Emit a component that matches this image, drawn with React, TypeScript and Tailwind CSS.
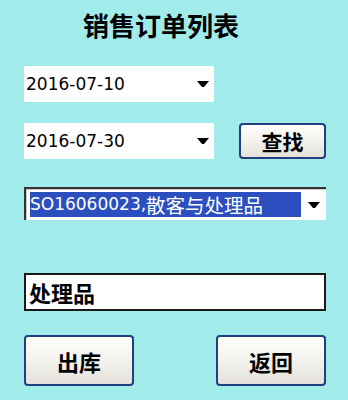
const cjk = '"Noto Sans CJK SC", "DejaVu Sans", sans-serif'
const latin = '"DejaVu Sans", "Noto Sans CJK SC", sans-serif'

function Arrow() {
  return (
    <svg width="12" height="6" viewBox="0 0 12 6" className="shrink-0">
      <path d="M0 0H12L7 6H5Z" fill="#000" />
    </svg>
  )
}

function DateBox({ value }: { value: string }) {
  return (
    <div className="w-[190px] h-[36px] bg-white flex items-center pl-[2px] pr-[5px]">
      <span className="flex-1 text-[17px] text-black leading-none" style={{ fontFamily: latin }}>
        {value}
      </span>
      <Arrow />
    </div>
  )
}

function XpButton({ label, className }: { label: string; className?: string }) {
  return (
    <button
      className={
        "h-full rounded-[4px] border-2 border-[#1f3f7f] bg-gradient-to-b from-[#fdfdfb] via-[#f3f2ee] to-[#e3e1da] text-black font-bold leading-none flex items-center justify-center " +
        (className ?? "")
      }
      style={{ fontFamily: cjk }}
    >
      {label}
    </button>
  )
}

export default function App() {
  return (
    <div className="w-[348px] h-[400px] bg-[#a1ecea] overflow-hidden flex flex-col pl-[24px]">
      <h1
        className="mt-[9px] ml-[59px] h-[32px] text-[26px] font-bold text-black leading-none flex items-center"
        style={{ fontFamily: cjk }}
      >
        销售订单列表
      </h1>

      <div className="mt-[25px]">
        <DateBox value="2016-07-10" />
      </div>

      <div className="mt-[21px] flex h-[36px]">
        <DateBox value="2016-07-30" />
        <XpButton label="查找" className="ml-[25px] w-[87px] text-[21px]" />
      </div>

      <div className="mt-[28px] w-[302px] h-[33px] bg-white border-t-2 border-l-2 border-t-[#333] border-l-[#333] flex items-center pl-[4px] pr-[6px] shadow-[inset_1px_1px_0_#c8c8c8]">
        <div className="w-[271px] h-[25px] bg-[#2b4fbf] text-white flex items-center whitespace-nowrap">
          <span className="text-[17px] leading-[25px]" style={{ fontFamily: latin }}>
            SO16060023,
          </span>
          <span className="text-[19.5px] leading-[25px]" style={{ fontFamily: cjk }}>
            散客与处理品
          </span>
        </div>
        <div className="flex-1 flex justify-end">
          <Arrow />
        </div>
      </div>

      <div
        className="mt-[53px] w-[302px] h-[38px] bg-white border-2 border-[#1a1a1a] flex items-center pl-[3px] text-[22px] font-bold text-black leading-none"
        style={{ fontFamily: cjk }}
      >
        处理品
      </div>

      <div className="mt-[24px] w-[302px] h-[51px] flex justify-between">
        <XpButton label="出库" className="w-[110px] text-[22px]" />
        <XpButton label="返回" className="w-[110px] text-[22px]" />
      </div>
    </div>
  )
}
